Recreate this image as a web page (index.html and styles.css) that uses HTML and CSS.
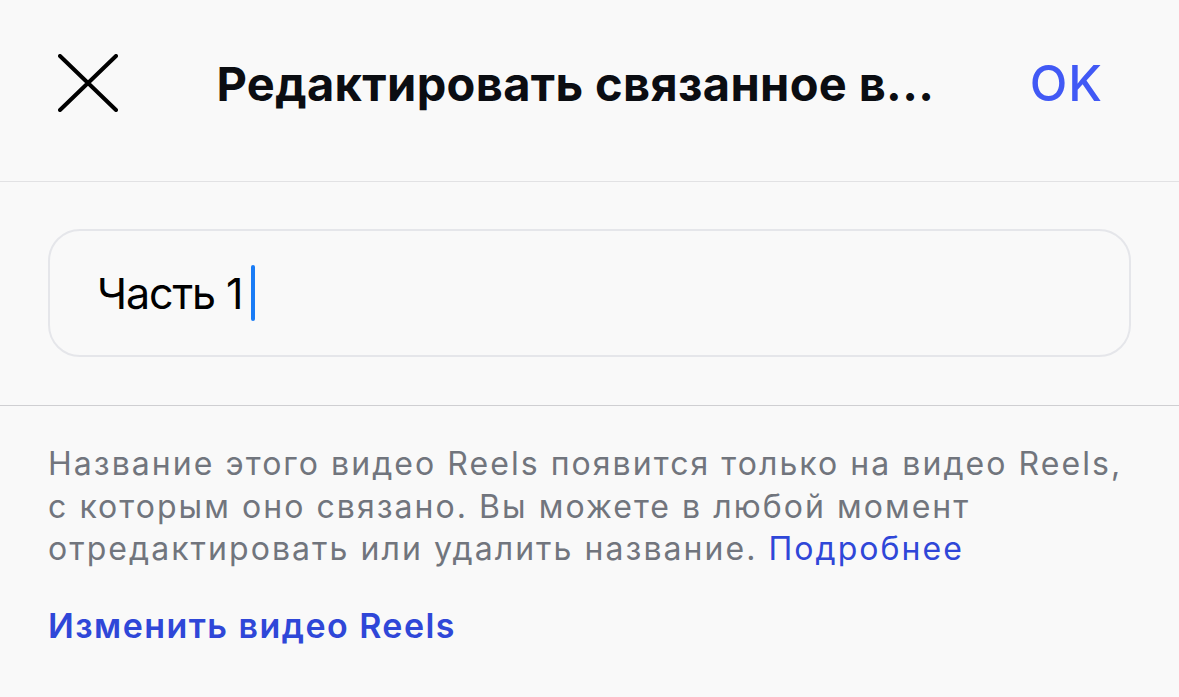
FILE: index.html
```html
<!DOCTYPE html>
<html lang="ru">
<head>
<meta charset="utf-8">
<title>Редактировать связанное видео</title>
<link rel="stylesheet" href="styles.css">
</head>
<body>
<div class="screen">
  <header class="topbar">
    <button class="close" aria-label="Закрыть">
      <svg viewBox="0 0 60 58" width="60" height="58">
        <path d="M2 2 L58 56 M58 2 L2 56" stroke="#000" stroke-width="4" stroke-linecap="round" fill="none"/>
      </svg>
    </button>
    <h1 class="title">Редактировать связанное в...</h1>
    <a class="ok">OK</a>
  </header>
  <section class="field-section">
    <div class="field">
      <span class="field-text">Часть 1</span><span class="caret"></span>
    </div>
  </section>
  <section class="info">
    <p class="desc">Название этого видео Reels появится только на видео Reels,<br>с которым оно связано. Вы можете в любой момент<br>отредактировать или удалить название. <a class="more">Подробнее</a></p>
    <a class="change">Изменить видео Reels</a>
  </section>
</div>
</body>
</html>
```
FILE: styles.css
```css
* { box-sizing: border-box; }
html, body { margin: 0; padding: 0; }
body {
  background: #f9f9f9;
  font-family: Inter, "Noto Sans", sans-serif;
  color: #000;
  width: 1179px;
  height: 697px;
  overflow: hidden;
}
.screen { display: flex; flex-direction: column; }
.topbar {
  height: 182px;
  padding: 0 76px 15px 58px;
  display: flex;
  align-items: center;
  justify-content: space-between;
  border-bottom: 1px solid #e2e2e4;
}
.close {
  border: 0;
  background: none;
  padding: 0;
  width: 60px;
  height: 58px;
  display: block;
}
.close svg { display: block; }
.title {
  margin: 0 0 0 3px;
  font-size: 47px;
  font-weight: 700;
  letter-spacing: 0.35px;
  color: #0b0d12;
  white-space: nowrap;
}
.ok {
  font-size: 49px;
  font-weight: 500;
  letter-spacing: 1px;
  color: #4159f5;
}
.field-section {
  padding: 47px 48px 48px;
  border-bottom: 1px solid #cfcfd2;
}
.field {
  height: 128px;
  border: 2px solid #e5e6ea;
  border-radius: 32px;
  padding-left: 47px;
  display: flex;
  align-items: center;
}
.field-text {
  font-size: 43px;
  font-weight: 400;
  letter-spacing: -1.1px;
  color: #000;
}
.caret {
  width: 4px;
  height: 56px;
  border-radius: 2px;
  background: #1a7cf6;
  margin-left: 9px;
}
.info {
  padding: 37px 10px 0 48px;
}
.desc {
  margin: 0;
  font-size: 32px;
  line-height: 42.5px;
  letter-spacing: 2.05px;
  color: #71757d;
  font-weight: 400;
}
.more { color: #2f47d8; }
.change {
  display: block;
  margin-top: 34px;
  font-size: 34px;
  font-weight: 600;
  letter-spacing: 1.45px;
  color: #2f47d8;
}
```
